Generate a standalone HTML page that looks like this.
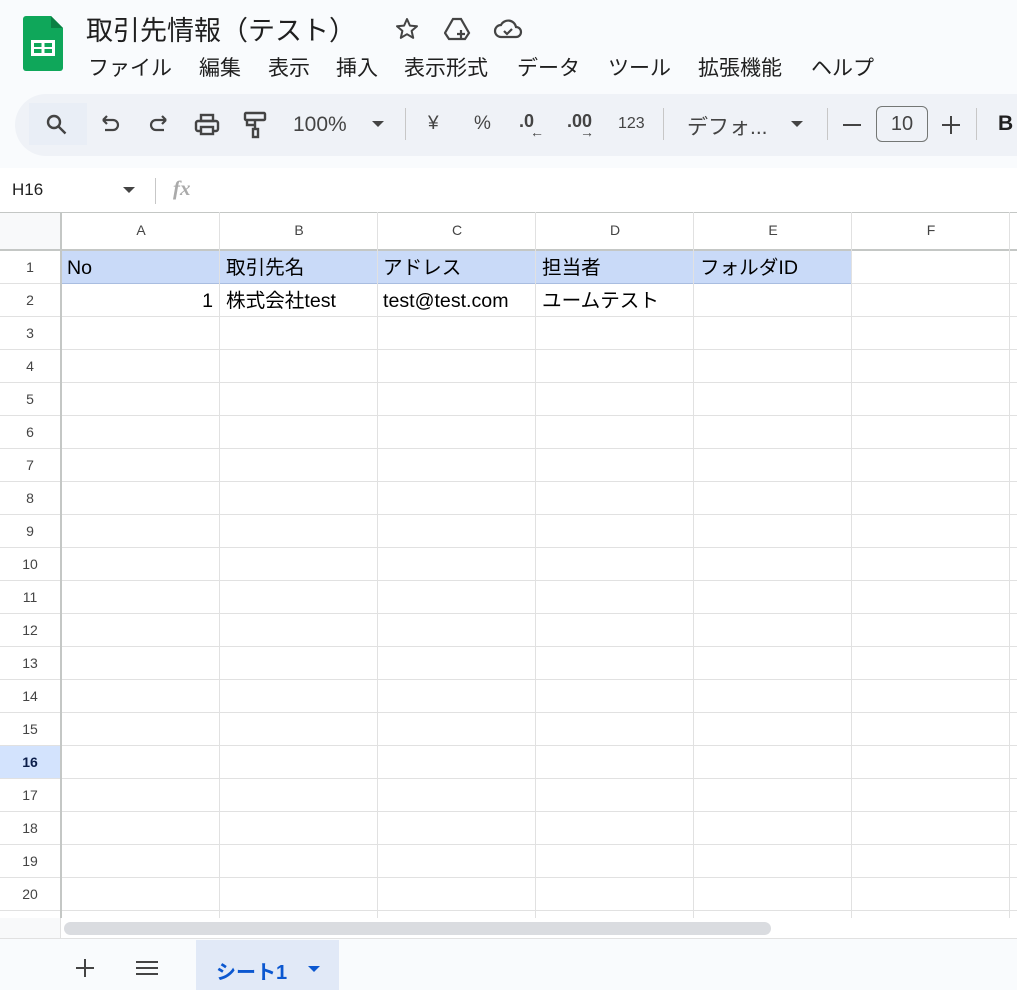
<!DOCTYPE html>
<html><head><meta charset="utf-8"><style>
*{box-sizing:border-box;margin:0;padding:0}
body{width:1017px;height:990px;overflow:hidden;background:#f9fbfd;font-family:"Liberation Sans","Noto Sans CJK JP",sans-serif;position:relative;color:#1f1f1f}
.a{position:absolute}
.m{position:absolute;top:52px;font-size:21px;color:#1f1f1f;white-space:nowrap}
.grid{position:absolute;left:0;top:212px;width:1017px;height:706px;background:#fff;overflow:hidden}
.vl{position:absolute;top:0;width:1px;height:706px;background:#e1e1e1}
.hl{position:absolute;left:0;height:1px;width:1017px;background:#e1e1e1}
.rn{position:absolute;left:0;width:60px;text-align:center;font-size:14px;color:#444;line-height:33px}
.ch{position:absolute;top:0;height:37px;line-height:37px;text-align:center;font-size:14px;color:#444;width:158px}
.c{position:absolute;font-size:19.6px;line-height:33px;color:#000;padding:0 6px;white-space:nowrap}
</style></head><body>
<svg class="a" style="left:23px;top:16px" width="40" height="55" viewBox="0 0 40 55"><path d="M3 0h25l12 12v40a3 3 0 0 1-3 3H3a3 3 0 0 1-3-3V3a3 3 0 0 1 3-3z" fill="#0fa75a"/><path d="M28 0l12 12H28z" fill="#0b8043"/><rect x="8" y="24" width="24" height="16" fill="#fff"/><rect x="11" y="27" width="7.5" height="4" fill="#0fa75a"/><rect x="21.5" y="27" width="7.5" height="4" fill="#0fa75a"/><rect x="11" y="33" width="7.5" height="4" fill="#0fa75a"/><rect x="21.5" y="33" width="7.5" height="4" fill="#0fa75a"/></svg>
<div class="a" style="left:86px;top:9px;font-size:27px;color:#1f1f1f;white-space:nowrap">取引先情報（テスト）</div>
<svg class="a" style="left:395px;top:17px" width="24" height="24" viewBox="0 0 24 24" fill="none" stroke="#444" stroke-width="2" stroke-linejoin="round"><path d="M12 2l2.9 6.6 7.1.6-5.4 4.7 1.6 7-6.2-3.7-6.2 3.7 1.6-7L2 9.2l7.1-.6z"/></svg>
<svg class="a" style="left:444px;top:16px" width="28" height="26" viewBox="0 0 28 26" fill="none" stroke="#444" stroke-width="2.2"><path d="M9 3h8l8 14-4 6H5L1 17z"/><path d="M17 14v8M13 18h8"/></svg>
<svg class="a" style="left:493px;top:18px" width="30" height="22" viewBox="0 0 30 22" fill="none" stroke="#444" stroke-width="2.2"><path d="M8 19a6 6 0 0 1 0-12 8 8 0 0 1 15 2 5 5 0 0 1 0 10z"/><path d="M11 13l3 3 5-5"/></svg>
<div class="m" style="left:88px">ファイル</div>
<div class="m" style="left:199px">編集</div>
<div class="m" style="left:268px">表示</div>
<div class="m" style="left:336px">挿入</div>
<div class="m" style="left:404px">表示形式</div>
<div class="m" style="left:517px">データ</div>
<div class="m" style="left:608px">ツール</div>
<div class="m" style="left:698px">拡張機能</div>
<div class="m" style="left:811px">ヘルプ</div>
<div class="a" style="left:15px;top:94px;width:1040px;height:62px;background:#eff2f7;border-radius:31px"></div>
<div class="a" style="left:29px;top:103px;width:58px;height:42px;background:#e9eef6"></div>
<svg class="a" style="left:45px;top:113px" width="24" height="24" viewBox="0 0 24 24" fill="none" stroke="#444" stroke-width="2.4"><circle cx="9" cy="9" r="6"/><path d="M13.5 13.5l7 7"/></svg>
<svg class="a" style="left:99px;top:115px" width="24" height="22" viewBox="0 0 24 22" fill="none" stroke="#444" stroke-width="2.2"><path d="M4 5h10a5 5 0 0 1 0 10H6M4 5l4-4M4 5l4 4"/></svg>
<svg class="a" style="left:146px;top:115px" width="24" height="22" viewBox="0 0 24 22" fill="none" stroke="#444" stroke-width="2.2"><path d="M20 5H10a5 5 0 0 0 0 10h8M20 5l-4-4M20 5l-4 4"/></svg>
<svg class="a" style="left:194px;top:112px" width="26" height="26" viewBox="0 0 26 26" fill="none" stroke="#444" stroke-width="2.4"><rect x="2" y="9" width="22" height="10" rx="2"/><rect x="7" y="3" width="12" height="6"/><rect x="7" y="15" width="12" height="7" fill="#eff2f7"/></svg>
<svg class="a" style="left:243px;top:111px" width="24" height="28" viewBox="0 0 24 28" fill="none" stroke="#444" stroke-width="2.4"><rect x="2" y="2" width="20" height="7" rx="1"/><path d="M12 9v5H4v-5M12 14v4"/><rect x="10" y="18" width="5" height="8"/></svg>
<div class="a" style="left:293px;top:113px;font-size:21px;color:#444">100%</div>
<div class="a" style="left:372px;top:121px;border:6px solid transparent;border-top:6px solid #444;border-bottom:0"></div>
<div class="a" style="left:405px;top:108px;width:1px;height:32px;background:#c7c7c7"></div>
<div class="a" style="left:428px;top:113px;font-size:19px;color:#444">¥</div>
<div class="a" style="left:474px;top:113px;font-size:19px;color:#444">%</div>
<div class="a" style="left:519px;top:111px;font-size:18px;color:#444;font-weight:bold">.0</div>
<div class="a" style="left:530px;top:124px;font-size:14px;color:#444;font-weight:bold">←</div>
<div class="a" style="left:567px;top:111px;font-size:18px;color:#444;font-weight:bold">.00</div>
<div class="a" style="left:580px;top:124px;font-size:14px;color:#444;font-weight:bold">→</div>
<div class="a" style="left:618px;top:115px;font-size:16px;color:#444">123</div>
<div class="a" style="left:663px;top:108px;width:1px;height:32px;background:#c7c7c7"></div>
<div class="a" style="left:687px;top:111px;font-size:21px;color:#444">デフォ...</div>
<div class="a" style="left:791px;top:121px;border:6px solid transparent;border-top:6px solid #444;border-bottom:0"></div>
<div class="a" style="left:827px;top:108px;width:1px;height:32px;background:#c7c7c7"></div>
<div class="a" style="left:843px;top:124px;width:18px;height:2px;background:#444"></div>
<div class="a" style="left:876px;top:106px;width:52px;height:36px;border:1px solid #747775;border-radius:6px;font-size:20px;color:#444;text-align:center;line-height:34px">10</div>
<div class="a" style="left:942px;top:124px;width:18px;height:2px;background:#444"></div>
<div class="a" style="left:950px;top:116px;width:2px;height:18px;background:#444"></div>
<div class="a" style="left:976px;top:108px;width:1px;height:32px;background:#c7c7c7"></div>
<div class="a" style="left:998px;top:112px;font-size:21px;color:#1f1f1f;font-weight:bold">B</div>
<div class="a" style="left:0;top:168px;width:1017px;height:44px;background:#fff"></div>
<div class="a" style="left:12px;top:180px;font-size:17px;color:#1f1f1f">H16</div>
<div class="a" style="left:123px;top:187px;border:6px solid transparent;border-top:6px solid #444;border-bottom:0"></div>
<div class="a" style="left:155px;top:178px;width:1px;height:26px;background:#c7c7c7"></div>
<div class="a" style="left:173px;top:176px;font-size:21px;color:#aaa;font-style:italic;font-family:'Liberation Serif',serif;font-weight:bold">fx</div>
<div class="grid">
<div class="a" style="left:0;top:0;width:60px;height:37px;background:#f8f9fa"></div>
<div class="a" style="left:61px;top:38px;width:790px;height:33px;background:#c9daf8"></div>
<div class="a" style="left:0;top:533px;width:61px;height:33px;background:#d3e3fd"></div>
<div class="hl" style="top:0;background:#c4c7c5"></div>
<div class="hl" style="top:37px;height:2px;background:#c4c7c5"></div>
<div class="hl" style="top:71px"></div><div class="hl" style="top:104px"></div><div class="hl" style="top:137px"></div><div class="hl" style="top:170px"></div><div class="hl" style="top:203px"></div><div class="hl" style="top:236px"></div><div class="hl" style="top:269px"></div><div class="hl" style="top:302px"></div><div class="hl" style="top:335px"></div><div class="hl" style="top:368px"></div><div class="hl" style="top:401px"></div><div class="hl" style="top:434px"></div><div class="hl" style="top:467px"></div><div class="hl" style="top:500px"></div><div class="hl" style="top:533px"></div><div class="hl" style="top:566px"></div><div class="hl" style="top:599px"></div><div class="hl" style="top:632px"></div><div class="hl" style="top:665px"></div><div class="hl" style="top:698px"></div>
<div class="a" style="left:61px;top:71px;width:790px;height:1px;background:#a9bde0"></div>
<div class="vl" style="left:60px;width:2px;background:#c4c7c5"></div>
<div class="vl" style="left:219px"></div><div class="vl" style="left:377px"></div><div class="vl" style="left:535px"></div><div class="vl" style="left:693px"></div><div class="vl" style="left:851px"></div><div class="vl" style="left:1009px"></div>
<div class="ch" style="left:62px">A</div><div class="ch" style="left:220px">B</div><div class="ch" style="left:378px">C</div><div class="ch" style="left:536px">D</div><div class="ch" style="left:694px">E</div><div class="ch" style="left:852px">F</div>
<div class="rn" style="top:39px">1</div><div class="rn" style="top:72px">2</div><div class="rn" style="top:105px">3</div><div class="rn" style="top:138px">4</div><div class="rn" style="top:171px">5</div><div class="rn" style="top:204px">6</div><div class="rn" style="top:237px">7</div><div class="rn" style="top:270px">8</div><div class="rn" style="top:303px">9</div><div class="rn" style="top:336px">10</div><div class="rn" style="top:369px">11</div><div class="rn" style="top:402px">12</div><div class="rn" style="top:435px">13</div><div class="rn" style="top:468px">14</div><div class="rn" style="top:501px">15</div><div class="rn" style="top:534px;font-weight:bold;color:#0b1e4a">16</div><div class="rn" style="top:567px">17</div><div class="rn" style="top:600px">18</div><div class="rn" style="top:633px">19</div><div class="rn" style="top:666px">20</div>
<div class="c" style="left:61px;top:40px">No</div>
<div class="c" style="left:220px;top:40px">取引先名</div>
<div class="c" style="left:377px;top:40px">アドレス</div>
<div class="c" style="left:536px;top:40px">担当者</div>
<div class="c" style="left:694px;top:40px">フォルダID</div>
<div class="c" style="left:62px;top:73px;width:157px;text-align:right">1</div>
<div class="c" style="left:220px;top:73px">株式会社test</div>
<div class="c" style="left:377px;top:73px">test@test.com</div>
<div class="c" style="left:536px;top:73px">ユームテスト</div>
</div>
<div class="a" style="left:0;top:918px;width:1017px;height:20px;background:#fff"></div>
<div class="a" style="left:0;top:918px;width:61px;height:20px;background:#f8f9fa;border-right:1px solid #e1e1e1"></div>
<div class="a" style="left:64px;top:922px;width:707px;height:13px;background:#dadce0;border-radius:7px"></div>
<div class="a" style="left:0;top:938px;width:1017px;height:1px;background:#e1e1e1"></div>
<div class="a" style="left:76px;top:967px;width:18px;height:2px;background:#444"></div>
<div class="a" style="left:84px;top:959px;width:2px;height:18px;background:#444"></div>
<div class="a" style="left:136px;top:961px;width:22px;height:2px;background:#444"></div>
<div class="a" style="left:136px;top:967px;width:22px;height:2px;background:#444"></div>
<div class="a" style="left:136px;top:973px;width:22px;height:2px;background:#444"></div>
<div class="a" style="left:196px;top:940px;width:143px;height:50px;background:#e1e9f7"></div>
<div class="a" style="left:216px;top:956px;font-size:20px;color:#0b57d0;font-weight:bold">シート1</div>
<div class="a" style="left:308px;top:966px;border:6px solid transparent;border-top:6px solid #0b57d0;border-bottom:0"></div>
</body></html>
